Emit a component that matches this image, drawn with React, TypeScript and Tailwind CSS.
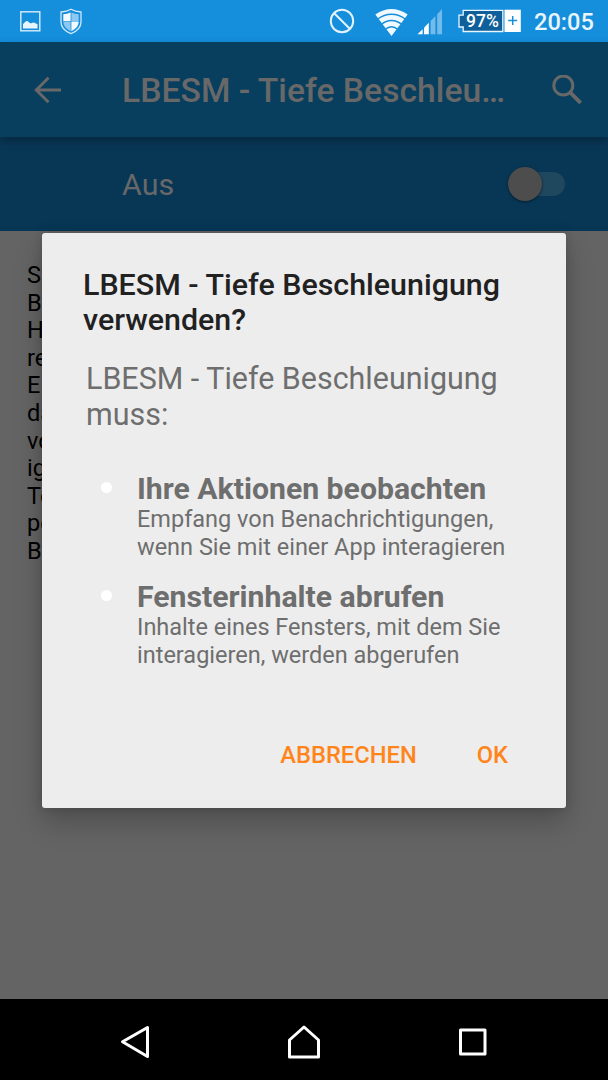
const bodyLines = ["S", "B", "H", "re", "E", "da", "vo", "ig", "Te", "pe", "B"];

const permissions = [
    {
        title: "Ihre Aktionen beobachten",
        lines: ["Empfang von Benachrichtigungen,", "wenn Sie mit einer App interagieren"],
    },
    {
        title: "Fensterinhalte abrufen",
        lines: ["Inhalte eines Fensters, mit dem Sie", "interagieren, werden abgerufen"],
    },
];

function StatusBar() {
    return (
        <div className="h-[42px] shrink-0 bg-[#158edc] flex items-center text-white">
            <svg className="ml-5 shrink-0" width="21" height="42" viewBox="0 0 21 42">
                <rect x="0.8" y="11.8" width="19" height="19" fill="none" stroke="#d6edfb" strokeWidth="1.4" />
                <path d="M3 28.500v-4.600c1.300-.5 2.300-2.900 3.800-2.900 1.600 0 2.200 1.800 3.500 2.200 1.300.3 2-1 3.200-.8 1.400.2 2.300 1.300 4 1.600v4.500z" fill="#e8f5fd" />
            </svg>
            <svg className="ml-[19px] shrink-0" width="22" height="42" viewBox="0 0 22 42">
                <path d="M11 9.300 Q15 11.800 21 12v10c0 5.400-4 9.300-10 11.700C5 31.300 1 27.400 1 22V12Q7 11.800 11 9.300z" fill="#158edc" stroke="#cfe9fa" strokeWidth="1.300" />
                <path d="M10.600 12.500v8.500H3.300v-6.800Q7 14 10.600 12.500z" fill="#f2faff" />
                <path d="M11.400 12.500v8.500h7.300v-6.800Q15 14 11.400 12.500z" fill="#8cc8ef" />
                <path d="M10.600 21.600v9.600C6 29 3.500 26 3.300 21.600z" fill="#8cc8ef" />
                <path d="M11.400 21.600v9.600c4.600-2.200 7.100-5.200 7.300-9.600z" fill="#f2faff" />
            </svg>
            <div className="grow" />
            <svg className="shrink-0" width="26" height="42" viewBox="0 0 26 42" fill="none" stroke="#e3f3fd" strokeWidth="2">
                <circle cx="13" cy="21" r="11.200" />
                <path d="M5.200 13.200 20.800 28.800" />
            </svg>
            <svg className="ml-5 shrink-0" width="34" height="42" viewBox="0 0 34 42">
                <path d="M.3 14.500Q16.500 3.500 32.700 14.500L16.500 36z" fill="#f0f9ff" />
                <g fill="none" stroke="#158edc" strokeWidth="1.400">
                    <path d="M2 19.500Q16.500 9 31 19.500" />
                    <path d="M6 24.500Q16.500 16.500 27 24.500" />
                    <path d="M10 29.500Q16.500 24 23 29.500" />
                </g>
            </svg>
            <svg className="ml-[8px] shrink-0" width="26" height="42" viewBox="0 0 26 42">
                <path d="M.5 34.300 5.600 29.200v5.100z" fill="#fff" />
                <path d="M7 27.700 11.800 22.800v11.500H7z" fill="#fff" />
                <path d="M13.600 21 18.400 16v18.300h-4.800z" fill="#73bbea" />
                <path d="M20.200 14.200 25 9v25.300h-4.800z" fill="#73bbea" />
            </svg>
            <div className="relative ml-[15px] w-[64px] h-[42px] shrink-0">
                <svg width="64" height="42" viewBox="0 0 64 42">
                    <path d="M5.200 10.300H44.800V31.500H5.200V27H1V15.200H5.200z" fill="#0f609a" stroke="#e9f6fe" strokeWidth="1.300" />
                    <rect x="46.500" y="9.700" width="16.300" height="22.300" fill="#fff" />
                    <path d="M50.200 20.600h9M54.700 16.100v9" stroke="#158edc" strokeWidth="1.500" />
                </svg>
                <span className="absolute left-[8px] top-[11px] text-[17.500px] leading-5 font-medium">97%</span>
            </div>
            <span className="ml-[12px] mr-[13px] mt-[3px] w-[61px] text-[23.6px] font-medium whitespace-nowrap text-[#e8f5fd]">20:05</span>
        </div>
    );
}

function AppBar() {
    return (
        <div className="relative z-10 h-[95px] shrink-0 bg-[#083f5e] flex items-center text-[#686868] shadow-[0_4px_9px_rgba(0,0,0,0.28)]">
            <svg className="ml-[34px] shrink-0" width="28" height="28" viewBox="0 0 28 28" fill="none" stroke="currentColor" strokeWidth="3">
                <path d="M27 14H2.500M14.500 1.800 2.300 14l12.200 12.200" />
            </svg>
            <h1 className="ml-[60px] mt-1 w-[400px] text-[33.700px] font-medium whitespace-nowrap">LBESM - Tiefe Beschleu…</h1>
            <svg className="ml-[30px] shrink-0" width="30" height="30" viewBox="0 0 30 30" fill="none" stroke="currentColor" strokeWidth="3">
                <circle cx="11.300" cy="10.500" r="9.500" />
                <path d="M18.100 17.300 28.600 27.800" strokeWidth="3.800" />
            </svg>
        </div>
    );
}

function SwitchBar() {
    return (
        <div className="h-[94px] shrink-0 bg-[#083756] flex items-center justify-between pl-[122px] pr-[43px]">
            <span className="mt-[2px] text-[30.4px] text-[#686868]">Aus</span>
            <div className="relative w-[57px] h-[34px]">
                <div className="absolute right-0 top-[5px] w-[46px] h-6 rounded-full bg-[#1f475e]" />
                <div className="absolute left-0 top-0 size-[34px] rounded-full bg-[#4d4d4d] shadow-[0_1px_3px_rgba(0,0,0,0.5)]" />
            </div>
        </div>
    );
}

function Dialog() {
    return (
        <div className="absolute z-20 left-[42px] top-[233px] w-[524px] h-[575px] rounded-[3px] bg-[#ededed] flex flex-col pt-[35px] shadow-[0_14px_28px_rgba(0,0,0,0.22),0_0_10px_rgba(0,0,0,0.15)]">
            <h2 className="pl-[41px] text-[30.4px] leading-[34.500px] font-medium text-[#212121]">
                LBESM - Tiefe Beschleunigung
                <br />
                verwenden?
            </h2>
            <p className="mt-6 pl-11 text-[30.450px] leading-[35.500px] text-[#6e6e6e]">
                LBESM - Tiefe Beschleunigung
                <br />
                muss:
            </p>
            <ul className="mt-[40px] flex flex-col gap-[19px] text-[#6e6e6e]">
                {permissions.map((item) => (
                    <li key={item.title} className="flex">
                        <span className="ml-[59px] mt-[10px] size-[11px] rounded-full bg-white" />
                        <div className="ml-[25px] whitespace-nowrap">
                            <h3 className="text-[30.200px] leading-[34px] -mb-px font-bold">{item.title}</h3>
                            {item.lines.map((line) => (
                                <p key={line} className="text-[23.500px] leading-7">{line}</p>
                            ))}
                        </div>
                    </li>
                ))}
            </ul>
            <div className="mt-auto mb-[39px] pr-[58px] flex justify-end gap-[60px] text-[23.700px] leading-7 font-medium text-[#ff851b]">
                <button>ABBRECHEN</button>
                <button>OK</button>
            </div>
        </div>
    );
}

function NavBar() {
    return (
        <div className="h-[81px] shrink-0 bg-black flex items-center justify-between pt-[2px] pl-[119px] pr-[121px]">
            <svg width="30" height="34" viewBox="0 0 30 34" fill="none" stroke="#fff" strokeWidth="3" strokeLinejoin="round">
                <path d="M28.500 3.500v29L3.500 17.800z" />
            </svg>
            <svg width="34" height="36" viewBox="0 0 34 36" fill="none" stroke="#fff" strokeWidth="3" strokeLinejoin="round">
                <path d="M2.500 34V17L17 4l14.500 13v17z" />
            </svg>
            <svg width="29" height="30" viewBox="0 0 29 30" fill="none" stroke="#fff" strokeWidth="3" strokeLinejoin="round">
                <rect x="2.500" y="4" width="24.500" height="24" />
            </svg>
        </div>
    );
}

function App() {
    return (
        <div className="relative w-[608px] h-[1080px] overflow-hidden bg-[#646464] flex flex-col font-['Roboto',sans-serif]">
            <StatusBar />
            <AppBar />
            <SwitchBar />
            <div className="grow pt-[31px] pl-[27px] text-[23.6px] leading-[27.600px] text-black">
                {bodyLines.map((line, i) => (
                    <p key={i}>{line}</p>
                ))}
            </div>
            <NavBar />
            <Dialog />
        </div>
    );
}

export default App;
